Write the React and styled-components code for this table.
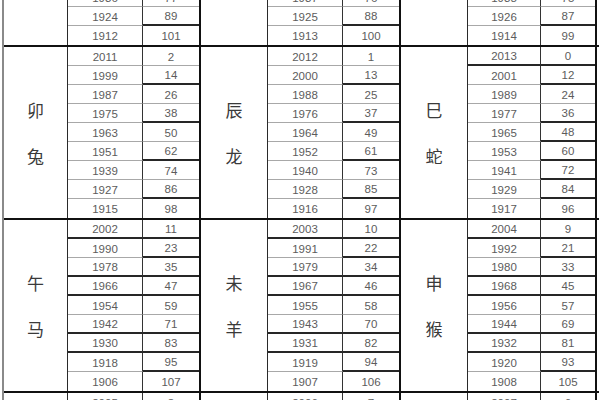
import styled, { createGlobalStyle } from 'styled-components'

const GlobalStyle = createGlobalStyle`
  body {
    margin: 0;
    background: #fff;
  }
`

const Page = styled.div`
  width: 600px;
  height: 400px;
  overflow: hidden;
  background: #fff;
`

const Table = styled.div`
  margin-top: -12px;
  margin-left: 2px;
  width: 595px;
  border-left: 2px solid #8a8a8a;
  display: flex;
  flex-direction: column;
`

const Section = styled.div`
  display: flex;
  border-bottom: 2px solid #111;
`

const Group = styled.div`
  display: grid;
  grid-template-columns: ${p => p.$cols};
  grid-auto-rows: 19px;
  border-right: 2px solid #111;
`

const Zodiac = styled.div`
  grid-column: 1;
  grid-row: 1 / span ${p => p.$rows};
  border-right: 1px solid #2a2a2a;
  display: flex;
  flex-direction: column;
  align-items: center;
  justify-content: center;
  gap: 21px;
  font-family: "Noto Sans CJK SC", "Noto Sans", sans-serif;
  font-size: 17px;
  color: #3a3a3a;
`

const lineStyle = {
  none: 'none',
  thin: '1px solid #a8a8a8',
  dark: '2px solid #262626',
}

const Cell = styled.div`
  box-sizing: border-box;
  display: flex;
  align-items: center;
  justify-content: center;
  padding-top: 1px;
  font-family: "Liberation Sans", Arial, sans-serif;
  font-size: 11.5px;
  color: #5c5c5c;
  border-bottom: ${p => lineStyle[p.$line]};
`

const YearCell = styled(Cell)`
  border-right: 1px solid #333;
`

const AgeCell = styled(Cell)``

const BASE = 2013

const sections = [
  {
    rows: 3,
    groups: [
      { name: '', start: 1936, year: '00', age: '01' },
      { name: '', start: 1937, year: '00', age: '01' },
      { name: '', start: 1938, year: '00', age: '01' },
    ],
  },
  {
    rows: 9,
    groups: [
      { name: '卯兔', start: 2011, year: '00000000', age: '01010101' },
      { name: '辰龙', start: 2012, year: '00000000', age: '01010101' },
      { name: '巳蛇', start: 2013, year: '10000000', age: '11011111' },
    ],
  },
  {
    rows: 9,
    groups: [
      { name: '午马', start: 2002, year: '10110110', age: '11110111' },
      { name: '未羊', start: 2003, year: '10110110', age: '11110111' },
      { name: '申猴', start: 2004, year: '10110110', age: '11110111' },
    ],
  },
  {
    // only the top edge of this block is in view
    rows: 1,
    groups: [
      { name: '', start: 2005, year: '', age: '' },
      { name: '', start: 2006, year: '', age: '' },
      { name: '', start: 2007, year: '', age: '' },
    ],
  },
]

const columns = ['64px 75px 56px', '67px 75px 56px', '67px 73px 54px']

const lineFor = (flags, i, rows) => {
  if (i === rows - 1) return 'none'
  return flags[i] === '1' ? 'dark' : 'thin'
}

const ZodiacGroup = ({ group, rows, cols }) => {
  const years = Array.from({ length: rows }, (_, i) => group.start - i * 12)
  return (
    <Group $cols={cols}>
      <Zodiac $rows={rows}>
        {group.name.split('').map(ch => <span key={ch}>{ch}</span>)}
      </Zodiac>
      {years.map((y, i) => [
        <YearCell key={'y' + y} $line={lineFor(group.year, i, rows)} style={{ gridColumn: 2, gridRow: i + 1 }}>
          {y}
        </YearCell>,
        <AgeCell key={'a' + y} $line={lineFor(group.age, i, rows)} style={{ gridColumn: 3, gridRow: i + 1 }}>
          {BASE - y}
        </AgeCell>,
      ])}
    </Group>
  )
}

const App = () => {
  return (
    <Page>
      <GlobalStyle />
      <Table>
        {sections.map((sec, si) => (
          <Section key={si}>
            {sec.groups.map((g, gi) => (
              <ZodiacGroup key={gi} group={g} rows={sec.rows} cols={columns[gi]} />
            ))}
          </Section>
        ))}
      </Table>
    </Page>
  )
}

export default App
